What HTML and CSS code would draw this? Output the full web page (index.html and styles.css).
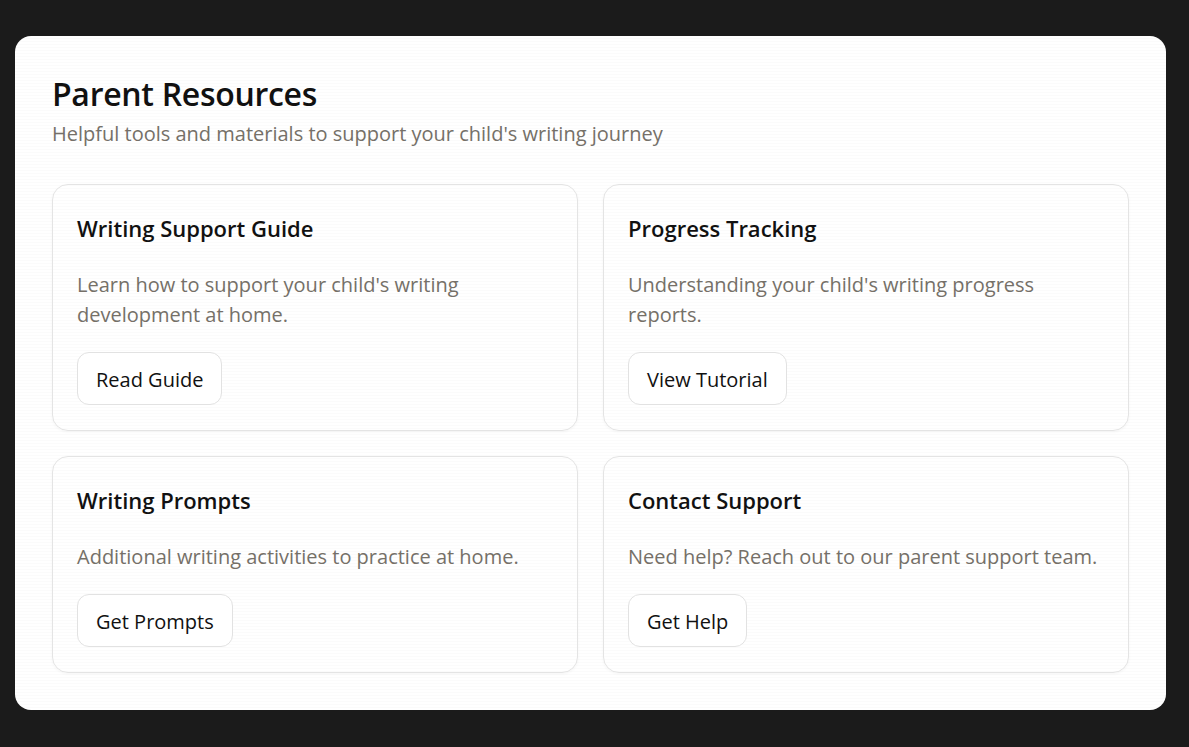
FILE: index.html
```html
<!DOCTYPE html>
<html lang="en">
<head>
<meta charset="utf-8">
<title>Parent Resources</title>
<link rel="stylesheet" href="styles.css">
</head>
<body>
<main class="panel">
  <h1 class="panel-title">Parent Resources</h1>
  <p class="panel-sub">Helpful tools and materials to support your child's writing journey</p>
  <div class="grid">
    <section class="card">
      <h3 class="card-title">Writing Support Guide</h3>
      <p class="card-text">Learn how to support your child's writing development at home.</p>
      <button class="btn">Read Guide</button>
    </section>
    <section class="card">
      <h3 class="card-title">Progress Tracking</h3>
      <p class="card-text">Understanding your child's writing progress reports.</p>
      <button class="btn">View Tutorial</button>
    </section>
    <section class="card">
      <h3 class="card-title">Writing Prompts</h3>
      <p class="card-text">Additional writing activities to practice at home.</p>
      <button class="btn">Get Prompts</button>
    </section>
    <section class="card">
      <h3 class="card-title">Contact Support</h3>
      <p class="card-text">Need help? Reach out to our parent support team.</p>
      <button class="btn">Get Help</button>
    </section>
  </div>
</main>
</body>
</html>
```
FILE: styles.css
```css
* { box-sizing: border-box; }
html, body { margin: 0; }
body {
  background: #1b1b1b;
  font-family: "Open Sans", "Noto Sans", sans-serif;
  padding: 36px 23px 36px 15px;
  min-height: 747px;
}
.panel {
  background: #ffffff repeating-linear-gradient(180deg, #ffffff 0 2px, #fbfbfb 2px 3px);
  border-radius: 16px;
  padding: 37px 37px 37px 37px;
}
.panel-title {
  margin: 0;
  font-size: 32px;
  font-weight: 600;
  line-height: 42px;
  color: #111;
  letter-spacing: -0.3px;
}
.panel-sub {
  margin: 4px 0 0;
  font-size: 20px;
  line-height: 30px;
  color: #757068;
}
.grid {
  display: grid;
  grid-template-columns: 1fr 1fr;
  gap: 25px;
  margin-top: 35px;
}
.card {
  border: 1px solid #e4e4e4;
  border-radius: 16px;
  padding: 29px 24px 25px;
  box-shadow: 0 1px 3px rgba(0,0,0,0.04);
  background: transparent;
  display: flex;
  flex-direction: column;
  align-items: flex-start;
}
.card-title {
  margin: 0 0 28px;
  font-size: 22px;
  font-weight: 600;
  line-height: 28px;
  color: #111;
}
.card-text {
  margin: 0 0 22px;
  font-size: 20px;
  line-height: 30px;
  color: #757068;
}
.btn {
  font-family: inherit;
  font-size: 20px;
  font-weight: 500;
  color: #111;
  background: #fff;
  border: 1px solid #e2e2e2;
  border-radius: 12px;
  height: 53px;
  padding: 2px 18px 0;
  cursor: pointer;
}
```
